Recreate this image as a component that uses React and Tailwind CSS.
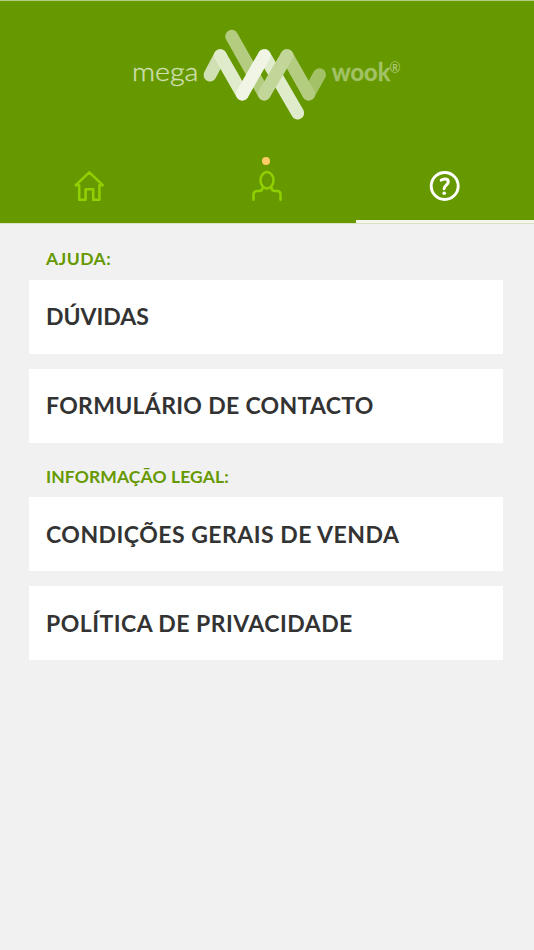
import { useState } from 'react';

const tabs = [
  { id: 'home', label: 'Início', Icon: HomeIcon },
  { id: 'account', label: 'Conta', Icon: UserIcon },
  { id: 'help', label: 'Ajuda', Icon: HelpIcon }
];

const sections = [
  {
    title: 'AJUDA:',
    titleClass: 'mb-[9px] tracking-[0.5px]',
    items: [
      { label: 'DÚVIDAS', className: 'pb-[2px] tracking-[0px]' },
      { label: 'FORMULÁRIO DE CONTACTO', className: 'pb-[2px] tracking-[0.31px]' }
    ]
  },
  {
    title: 'INFORMAÇÃO LEGAL:',
    titleClass: 'mb-[8px] pt-px -mt-px tracking-[0.1px]',
    items: [
      { label: 'CONDIÇÕES GERAIS DE VENDA', className: 'tracking-[0.48px]' },
      { label: 'POLÍTICA DE PRIVACIDADE', className: 'tracking-[0.46px]' }
    ]
  }
];

function Logo() {
  return (
    <svg width="274" height="96" viewBox="130 27 274 96" fill="none" strokeWidth="12.9" strokeLinecap="round">
      <path d="M231.7 36.3 264.3 94" stroke="#b3cc80" />
      <path d="M210 75 220.3 55.6" stroke="#d1e0b3" />
      <path d="M220.3 55.6 242.3 94" stroke="#e0ebcc" />
      <path d="M264.3 55.6 297.7 113" stroke="#e0ebcc" />
      <path d="M242.3 94 264.3 55.6" stroke="#f0f5e6" />
      <path d="M319.5 74.7 308.7 94" stroke="#a3c266" />
      <path d="M287 55.6 308.7 94" stroke="#b3cc80" />
      <path d="M264.3 94 287 55.6" stroke="#c2d699" />
      <text x="132" y="81" textLength="66.5" lengthAdjust="spacingAndGlyphs" stroke="#d1e0b3" strokeWidth="0.3" className="fill-[#d1e0b3] font-['Lato'] text-[24.5px] font-light">mega</text>
      <text x="331.8" y="81" textLength="58.5" lengthAdjust="spacingAndGlyphs" stroke="#a3c266" strokeWidth="0.3" className="fill-[#a3c266] font-['Lato'] text-[24px] font-bold">wook</text>
      <text x="389.6" y="72.6" textLength="11" lengthAdjust="spacingAndGlyphs" className="fill-[#b3cc80] font-['Lato'] text-[14.5px]">®</text>
    </svg>
  );
}

function HomeIcon() {
  return (
    <svg width="32" height="32" viewBox="73 170 32 32" fill="none" stroke="#90d000" strokeWidth="2.5" strokeLinejoin="round" strokeLinecap="round">
      <path d="M79.2 185.2h-3.4L89.3 172.4 102.8 185.2h-3.4V199.8h-6.2V189.2h-7.6V199.8H79.2Z" />
    </svg>
  );
}

function UserIcon() {
  return (
    <svg width="32" height="32" viewBox="251 170 32 32" fill="none" stroke="#90d000" strokeWidth="2.5" strokeLinecap="round">
      <ellipse cx="267" cy="180.3" rx="6.5" ry="8.2" />
      <path d="M253.5 199.8v-5.3c0-2.3 1.2-3.4 3.4-3.4h2.2c2 0 3.3-1 3.5-3.4M280.5 199.8v-5.3c0-2.3-1.2-3.4-3.4-3.4H275c-2 0-3.3-1-3.5-3.4" />
    </svg>
  );
}

function HelpIcon() {
  return (
    <svg width="32" height="32" viewBox="429 170 32 32" fill="none" stroke="#fff" strokeWidth="2.9">
      <circle cx="444.7" cy="186" r="13.5" />
      <path d="M441.2 180.2c1.1-.9 2.2-1.3 3.6-1.3 2.1 0 3.5 1 3.5 2.9 0 3.2-4.1 3.3-4.2 6.9" strokeWidth="3" strokeLinecap="round" />
      <circle cx="444.2" cy="193.2" r="1.8" fill="#fff" stroke="none" />
    </svg>
  );
}

function App() {
  const [activeTab, setActiveTab] = useState('help');

  return (
    <div className="min-h-screen bg-[#f1f1f1] font-['Lato',sans-serif]">
      {/* Header */}
      <header className="border-t border-[#b3cc80] bg-[#669900]">
        <div className="flex h-[148px] justify-center pt-[26px]">
          <Logo />
        </div>
        <nav className="grid h-[75px] grid-cols-3 border-b border-[#d8e3c0]">
          {tabs.map(({ id, label, Icon }) => (
            <button
              key={id}
              aria-label={label}
              onClick={() => setActiveTab(id)}
              className={`relative flex justify-center pt-[21px] ${activeTab === id ? 'border-b-3 border-[#f4f6ee]' : ''}`}
            >
              <Icon />
              {id === 'account' && (
                <span className="absolute top-2 left-[84px] size-2 rounded-full bg-[#ffcc66]" />
              )}
            </button>
          ))}
        </nav>
      </header>

      {/* Menu sections */}
      <main className="flex flex-col gap-[22px] pt-[23px] pr-[31px] pl-[29px]">
        {sections.map(section => (
          <section key={section.title}>
            <h2 className={`pl-[17px] text-[17.5px] leading-6 font-bold text-[#669900] ${section.titleClass}`}>
              {section.title}
            </h2>
            <div className="flex flex-col gap-[15px]">
              {section.items.map(item => (
                <button
                  key={item.label}
                  className={`flex h-[74px] items-center bg-white pl-[17px] text-left text-[23px] font-bold whitespace-nowrap text-[#333333] ${item.className}`}
                >
                  {item.label}
                </button>
              ))}
            </div>
          </section>
        ))}
      </main>
    </div>
  );
}

export default App;
